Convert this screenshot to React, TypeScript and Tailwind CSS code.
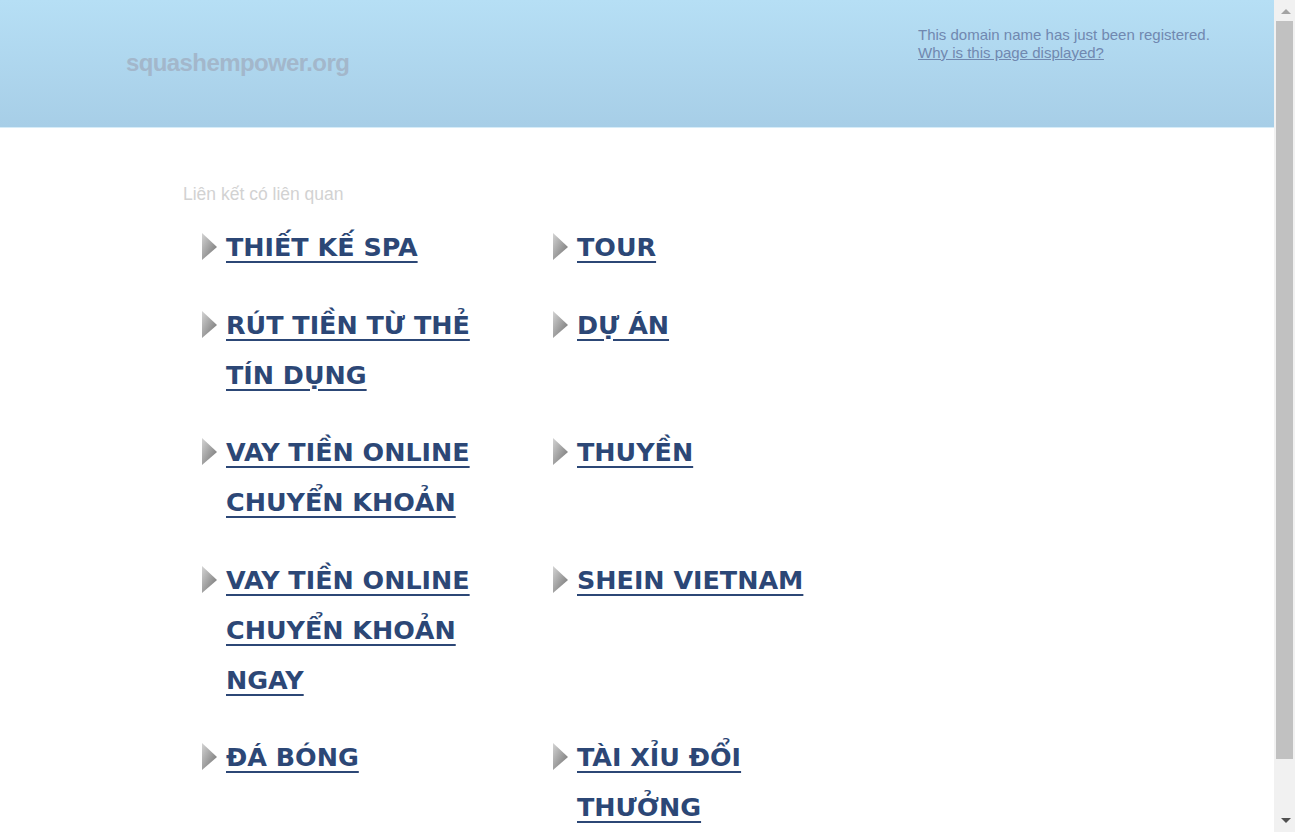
import React from 'react';

const links: [string, string][] = [
  ['THIẾT KẾ SPA', 'TOUR'],
  ['RÚT TIỀN TỪ THẺ TÍN DỤNG', 'DỰ ÁN'],
  ['VAY TIỀN ONLINE CHUYỂN KHOẢN', 'THUYỀN'],
  ['VAY TIỀN ONLINE CHUYỂN KHOẢN NGAY', 'SHEIN VIETNAM'],
  ['ĐÁ BÓNG', 'TÀI XỈU ĐỔI THƯỞNG'],
];

const Arrow = () => (
  <svg width="16" height="28" viewBox="0 0 16 28" className="shrink-0 mt-[11px]">
    <defs>
      <linearGradient id="arr" x1="0" y1="0" x2="1" y2="1">
        <stop offset="0" stopColor="#d4d4d4" />
        <stop offset="1" stopColor="#6e6e6e" />
      </linearGradient>
    </defs>
    <polygon points="0,0 15,14 0,27" fill="url(#arr)" />
  </svg>
);

const LinkItem = ({ text }: { text: string }) => (
  <div className="flex items-start gap-[8px] pl-[19px]">
    <Arrow />
    <a
      href="#"
      className="max-w-[275px] text-[25.4px] leading-[50px] font-bold text-[#2c4776] underline underline-offset-[5px] decoration-[2px]"
      style={{ fontFamily: '"DejaVu Sans", Verdana, sans-serif' }}
    >
      {text}
    </a>
  </div>
);

const Scrollbar = () => (
  <div className="fixed top-0 right-0 h-screen w-[21px] bg-[#f1f1f1] flex flex-col">
    <div className="h-[21px] flex justify-center pt-[9px] pl-[2px]">
      <svg width="10" height="5" viewBox="0 0 10 5"><polygon points="0,5 5,0 10,5" fill="#a3a3a3" /></svg>
    </div>
    <div className="ml-[2px] w-[17px] h-[738px] bg-[#c1c1c1]" />
    <div className="flex-1 flex justify-center items-end pb-[9px] pl-[2px]">
      <svg width="10" height="5" viewBox="0 0 10 5"><polygon points="0,0 10,0 5,5" fill="#505050" /></svg>
    </div>
  </div>
);

export default function App() {
  return (
    <div className="min-h-[900px] bg-white" style={{ fontFamily: '"Liberation Sans", Arial, sans-serif' }}>
      <div className="mr-[21px]">
        <header className="h-[128px] bg-gradient-to-b from-[#b6dff5] to-[#a7cee7] border-b border-[#d6ecf8] flex justify-between">
          <div className="pl-[126px] pt-[45px] text-[24px] font-bold text-[#a3b7cb] tracking-[-0.6px]">
            squashempower.org
          </div>
          <div className="pt-[26px] text-[15px] leading-[18px] text-[#7088b0] w-[356px]">
            <div>This domain name has just been registered.</div>
            <a href="#" className="underline">Why is this page displayed?</a>
          </div>
        </header>
        <main className="pl-[183px] pt-[56px]">
          <div className="text-[17.5px] text-[#d2d2d2] leading-[20px]">Liên kết có liên quan</div>
          <div className="grid grid-cols-[351px_351px] pt-[18px]">
            {links.map(([a, b]) => (
              <React.Fragment key={a + b}>
                <div className="pb-[27.5px]"><LinkItem text={a} /></div>
                <div className="pb-[27.5px]"><LinkItem text={b} /></div>
              </React.Fragment>
            ))}
          </div>
        </main>
      </div>
      <Scrollbar />
    </div>
  );
}
